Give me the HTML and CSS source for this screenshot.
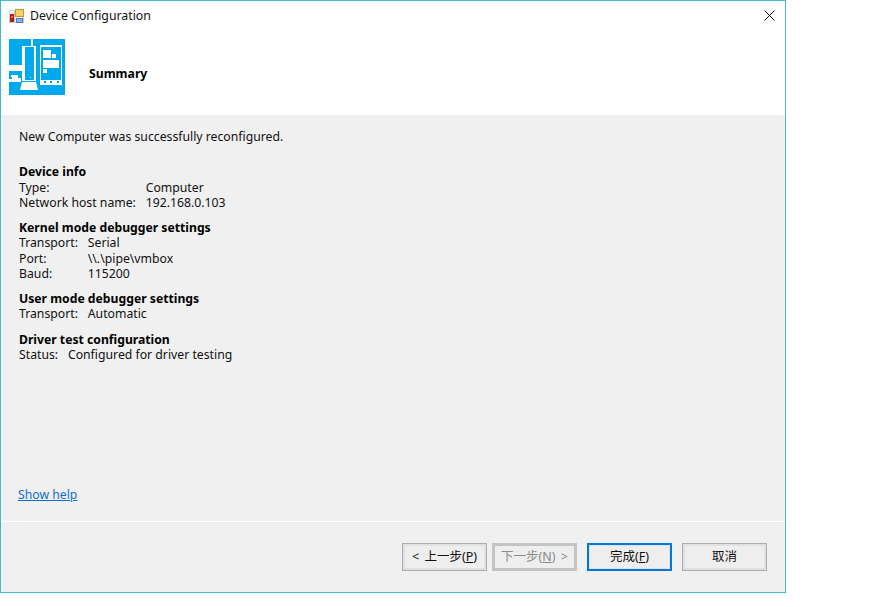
FILE: index.html
```html
<!DOCTYPE html>
<html lang="en">
<head>
<meta charset="utf-8">
<title>Device Configuration</title>
<link rel="stylesheet" href="styles.css">
</head>
<body>
<div class="window">
  <div class="top">
    <div class="titlebar">
      <svg class="app-icon" width="16" height="16" viewBox="0 0 16 16">
        <rect x="0" y="2" width="15" height="13" fill="#cfcfcf"/>
        <rect x="1" y="3" width="13" height="11" fill="#f2f2f2"/>
        <path d="M5.5 2v13M0 7.5h15M0 11.5h15" stroke="#c8c8c8" stroke-width="1" fill="none"/>
        <rect x="6" y="1" width="9" height="8" fill="#c7962a"/>
        <rect x="7" y="2" width="7" height="6" fill="#f5d262"/>
        <rect x="7" y="10" width="7" height="5" fill="#4a7cc4"/>
        <rect x="8" y="11" width="5" height="3" fill="#8db4ea"/>
        <rect x="1" y="6" width="4" height="8" fill="#a82020"/>
        <rect x="2" y="8" width="2" height="2" fill="#e86a5a"/>
      </svg>
      <span class="title">Device Configuration</span>
      <svg class="close" width="11" height="11" viewBox="0 0 11 11">
        <path d="M0.5 0.5L10.5 10.5M10.5 0.5L0.5 10.5" stroke="#111" stroke-width="1" fill="none"/>
      </svg>
    </div>
    <div class="banner">
      <svg class="banner-icon" width="56" height="56" viewBox="0 0 56 56">
        <rect width="56" height="56" fill="#00a8ec"/>
        <g fill="#fff">
          <rect x="22" y="0" width="2" height="7"/>
          <path fill-rule="evenodd" d="M13 7h14v35H13zM16 8v33h9V8z"/>
          <path d="M13 43h14l2 8H11z"/>
          <rect x="0" y="26" width="13" height="6"/>
          <path d="M2 36h7v3h3v4H0v-3h3v-2H2z"/>
          <rect x="31" y="6" width="22" height="40"/>
        </g>
        <rect x="21" y="38" width="1" height="1" fill="#fff"/>
        <rect x="32" y="8" width="20" height="33" fill="#00a8ec"/>
        <g fill="#fff">
          <rect x="34" y="11" width="8" height="8"/>
          <rect x="43" y="15" width="4" height="4"/>
          <rect x="34" y="21" width="16" height="8"/>
          <rect x="34" y="30" width="4" height="4"/>
        </g>
        <g fill="#00a8ec">
          <rect x="35" y="42" width="2" height="2"/>
          <rect x="41" y="42" width="2" height="2"/>
          <rect x="48" y="42" width="2" height="2"/>
        </g>
      </svg>
      <span class="banner-title">Summary</span>
    </div>
  </div>
  <div class="content">
    <p class="intro">New Computer was successfully reconfigured.</p>
    <section class="group first">
      <h2>Device info</h2>
      <dl>
        <dt>Type:</dt><dd>Computer</dd>
        <dt>Network host name:</dt><dd>192.168.0.103</dd>
      </dl>
    </section>
    <section class="group">
      <h2>Kernel mode debugger settings</h2>
      <dl>
        <dt>Transport:</dt><dd>Serial</dd>
        <dt>Port:</dt><dd>\\.\pipe\vmbox</dd>
        <dt>Baud:</dt><dd>115200</dd>
      </dl>
    </section>
    <section class="group">
      <h2>User mode debugger settings</h2>
      <dl>
        <dt>Transport:</dt><dd>Automatic</dd>
      </dl>
    </section>
    <section class="group last">
      <h2>Driver test configuration</h2>
      <dl>
        <dt>Status:</dt><dd>Configured for driver testing</dd>
      </dl>
    </section>
    <a class="help" href="#">Show help</a>
  </div>
  <div class="footer">
    <button class="btn" type="button">&lt; 上一步(<u>P</u>)</button>
    <button class="btn disabled" type="button">下一步(<u>N</u>) &gt;</button>
    <button class="btn primary" type="button">完成(<u>F</u>)</button>
    <button class="btn" type="button">取消</button>
  </div>
</div>
</body>
</html>
```
FILE: styles.css
```css
* { box-sizing: border-box; }
html, body { margin: 0; padding: 0; background: #fff; }
body {
  font-family: "Noto Sans", "Noto Sans CJK SC", sans-serif;
  font-size: 12.24px;
  color: #111;
}
.window {
  width: 786px;
  height: 593px;
  border: 1px solid #46b9cc;
  background: #f0f0f0;
  display: flex;
  flex-direction: column;
}
.top { background: #fff; height: 114px; flex: none; }
.titlebar { display: flex; align-items: center; height: 29px; padding: 0 9px 0 8px; }
.app-icon { flex: none; }
.title { margin-left: 5px; font-size: 12.3px; }
.close { margin-left: auto; margin-right: 1px; }
.banner { display: flex; align-items: flex-start; height: 65px; padding: 9px 8px 0; }
.banner-icon { flex: none; }
.banner-title { margin-left: 24px; margin-top: 26px; line-height: 17px; font-weight: 700; color: #000; }
.content {
  flex: 1;
  padding: 13px 18px 0;
  display: flex;
  flex-direction: column;
  min-height: 0;
}
.intro { margin: 0; line-height: 17px; }
.group { margin-top: 9.6px; }
.group.first { margin-top: 19.4px; }
.group.last { margin-top: 10px; }
.group h2 { margin: 0; font-size: 12.2px; font-weight: 700; line-height: 15.35px; color: #000; }
dl {
  margin: 0;
  display: grid;
  grid-template-columns: max-content 1fr;
  column-gap: 9.8px;
  line-height: 15.35px;
}
dt, dd { margin: 0; }
.help {
  margin-top: auto;
  margin-bottom: 18px;
  margin-left: -1px;
  color: #0f6fd1;
  line-height: 17px;
}
.footer {
  flex: none;
  height: 71px;
  border-top: 1px solid #fff;
  display: flex;
  justify-content: flex-end;
  align-items: flex-start;
  gap: 5px;
  padding: 21px 18px 0 0;
}
.btn {
  width: 85px;
  height: 28px;
  padding: 0 0 3px;
  font: inherit;
  font-size: 12.5px;
  word-spacing: 2px;
  color: #111;
  background: #eeeeee;
  border: 1px solid #adadad;
  box-shadow: inset 0 0 0 2px #e1e1e1;
}
.btn.primary { border: 2px solid #0078d7; margin-left: 5px; margin-right: 5px; box-shadow: inset 0 0 0 1px #e1e1e1; }
.btn.disabled { background: #eeeeee; border: 2px solid #c4c4c4; box-shadow: inset 0 0 0 1px #c4c4c4; color: #8a8a8a; }
```
